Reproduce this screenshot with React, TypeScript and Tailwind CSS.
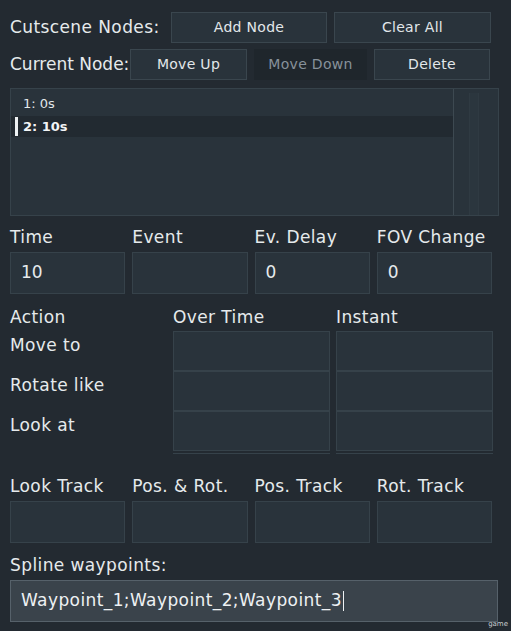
const font = "font-['DejaVu_Sans',sans-serif]";
const label = "h-[24px] whitespace-nowrap text-[17px] leading-[24px] tracking-[0.4px]";

function Btn({ label, w, disabled }: { label: string; w: string; disabled?: boolean }) {
	return (
		<div
			className={`${w} flex h-[31px] shrink-0 items-center justify-center text-[14px] tracking-[0.3px] ${
				disabled
					? "bg-[#1f262c] text-[#87919a]"
					: "border border-[#3a464e] bg-[#29333b] text-[#e2e7ea]"
			}`}
		>
			{label}
		</div>
	);
}

function Field({ value }: { value?: string }) {
	return (
		<div className="flex h-[42px] items-center border border-[#36424a] bg-[#29333b] px-[10px] text-[17px] text-[#e6eaec]">
			{value}
		</div>
	);
}

export default function App() {
	const fields = [
		{ label: "Time", value: "10" },
		{ label: "Event", value: "" },
		{ label: "Ev. Delay", value: "0" },
		{ label: "FOV Change", value: "0" },
	];
	const tracks = ["Look Track", "Pos. & Rot.", "Pos. Track", "Rot. Track"];
	const actions = ["Move to", "Rotate like", "Look at"];

	return (
		<div className={`${font} relative h-[631px] w-[511px] overflow-hidden bg-[#232a31] px-[10px] pt-[12px] text-[#e6eaec]`}>
			<div className="flex items-center">
				<div className="w-[161px] shrink-0 whitespace-nowrap text-[17px] tracking-[0.4px]">Cutscene Nodes:</div>
				<div className="flex gap-[7px]">
					<Btn label="Add Node" w="w-[156px]" />
					<Btn label="Clear All" w="w-[157px]" />
				</div>
			</div>
			<div className="mt-[6px] flex items-center">
				<div className="w-[120px] shrink-0 whitespace-nowrap text-[17px]">Current Node:</div>
				<div className="flex gap-[7px]">
					<Btn label="Move Up" w="w-[117px]" />
					<Btn label="Move Down" w="w-[113px]" disabled />
					<Btn label="Delete" w="w-[116px]" />
				</div>
			</div>

			<div className="mt-[8px] flex h-[128px] w-[489px] border border-[#36424a] bg-[#29333b]">
				<div className="flex-1 pt-[4px]">
					<div className="flex h-[21px] items-center pl-[12px] text-[13px] text-[#e2e7ea]">1: 0s</div>
					<div className="mt-[2px] flex h-[21px] items-center bg-[#222a31] text-[13px] font-semibold text-[#f2f5f6]">
						<div className="ml-[4px] mr-[5px] h-[19px] w-[3px] bg-[#eef2f4]" />
						2: 10s
					</div>
				</div>
				<div className="flex w-[45px] border-l border-[#3d4951] pt-[4px]">
					<div className="ml-[15px] h-full w-[10px] border-x border-[#2f3a42] bg-[#2b363e]" />
				</div>
			</div>

			<div className="mt-[9px] grid w-[482px] grid-cols-4 gap-x-[7px]">
				{fields.map((f) => (
					<div key={f.label}>
						<div className={label}>{f.label}</div>
						<div className="mt-[3px]">
							<Field value={f.value} />
						</div>
					</div>
				))}
			</div>

			<div className="mt-[11px] flex">
				<div className="w-[163px]">
					<div className={label}>Action</div>
					<div className="mt-[2px]">
						{actions.map((a) => (
							<div key={a} className="h-[40px] whitespace-nowrap pt-[2px] text-[17px] leading-[24px] tracking-[0.4px]">
								{a}
							</div>
						))}
					</div>
				</div>
				<div className="flex gap-[6px]">
					{["Over Time", "Instant"].map((c) => (
						<div key={c} className="w-[157px]">
							<div className={label}>{c}</div>
							<div className="mt-[2px] border-b border-[#36424a] pb-[2px]">
								{actions.map((a) => (
									<div key={a} className="h-[40px] border border-[#36424a] bg-[#29333b]" />
								))}
							</div>
						</div>
					))}
				</div>
			</div>

			<div className="mt-[20px] grid w-[482px] grid-cols-4 gap-x-[7px]">
				{tracks.map((t) => (
					<div key={t}>
						<div className={label}>{t}</div>
						<div className="mt-[3px]">
							<Field />
						</div>
					</div>
				))}
			</div>

			<div className={`mt-[10px] ${label}`}>Spline waypoints:</div>
			<div className="mt-[3px] flex h-[42px] w-[488px] items-center whitespace-nowrap border border-[#56616a] bg-[#3a434b] px-[10px] text-[17px] tracking-[0.4px] text-[#eef1f3]">
				Waypoint_1;Waypoint_2;Waypoint_3
				<span className="ml-[1px] h-[20px] w-[1px] bg-[#eef1f3]" />
			</div>

			<div className="absolute bottom-[2px] right-[3px] text-[7px] text-[#c8cdd0]">game</div>
		</div>
	);
}
